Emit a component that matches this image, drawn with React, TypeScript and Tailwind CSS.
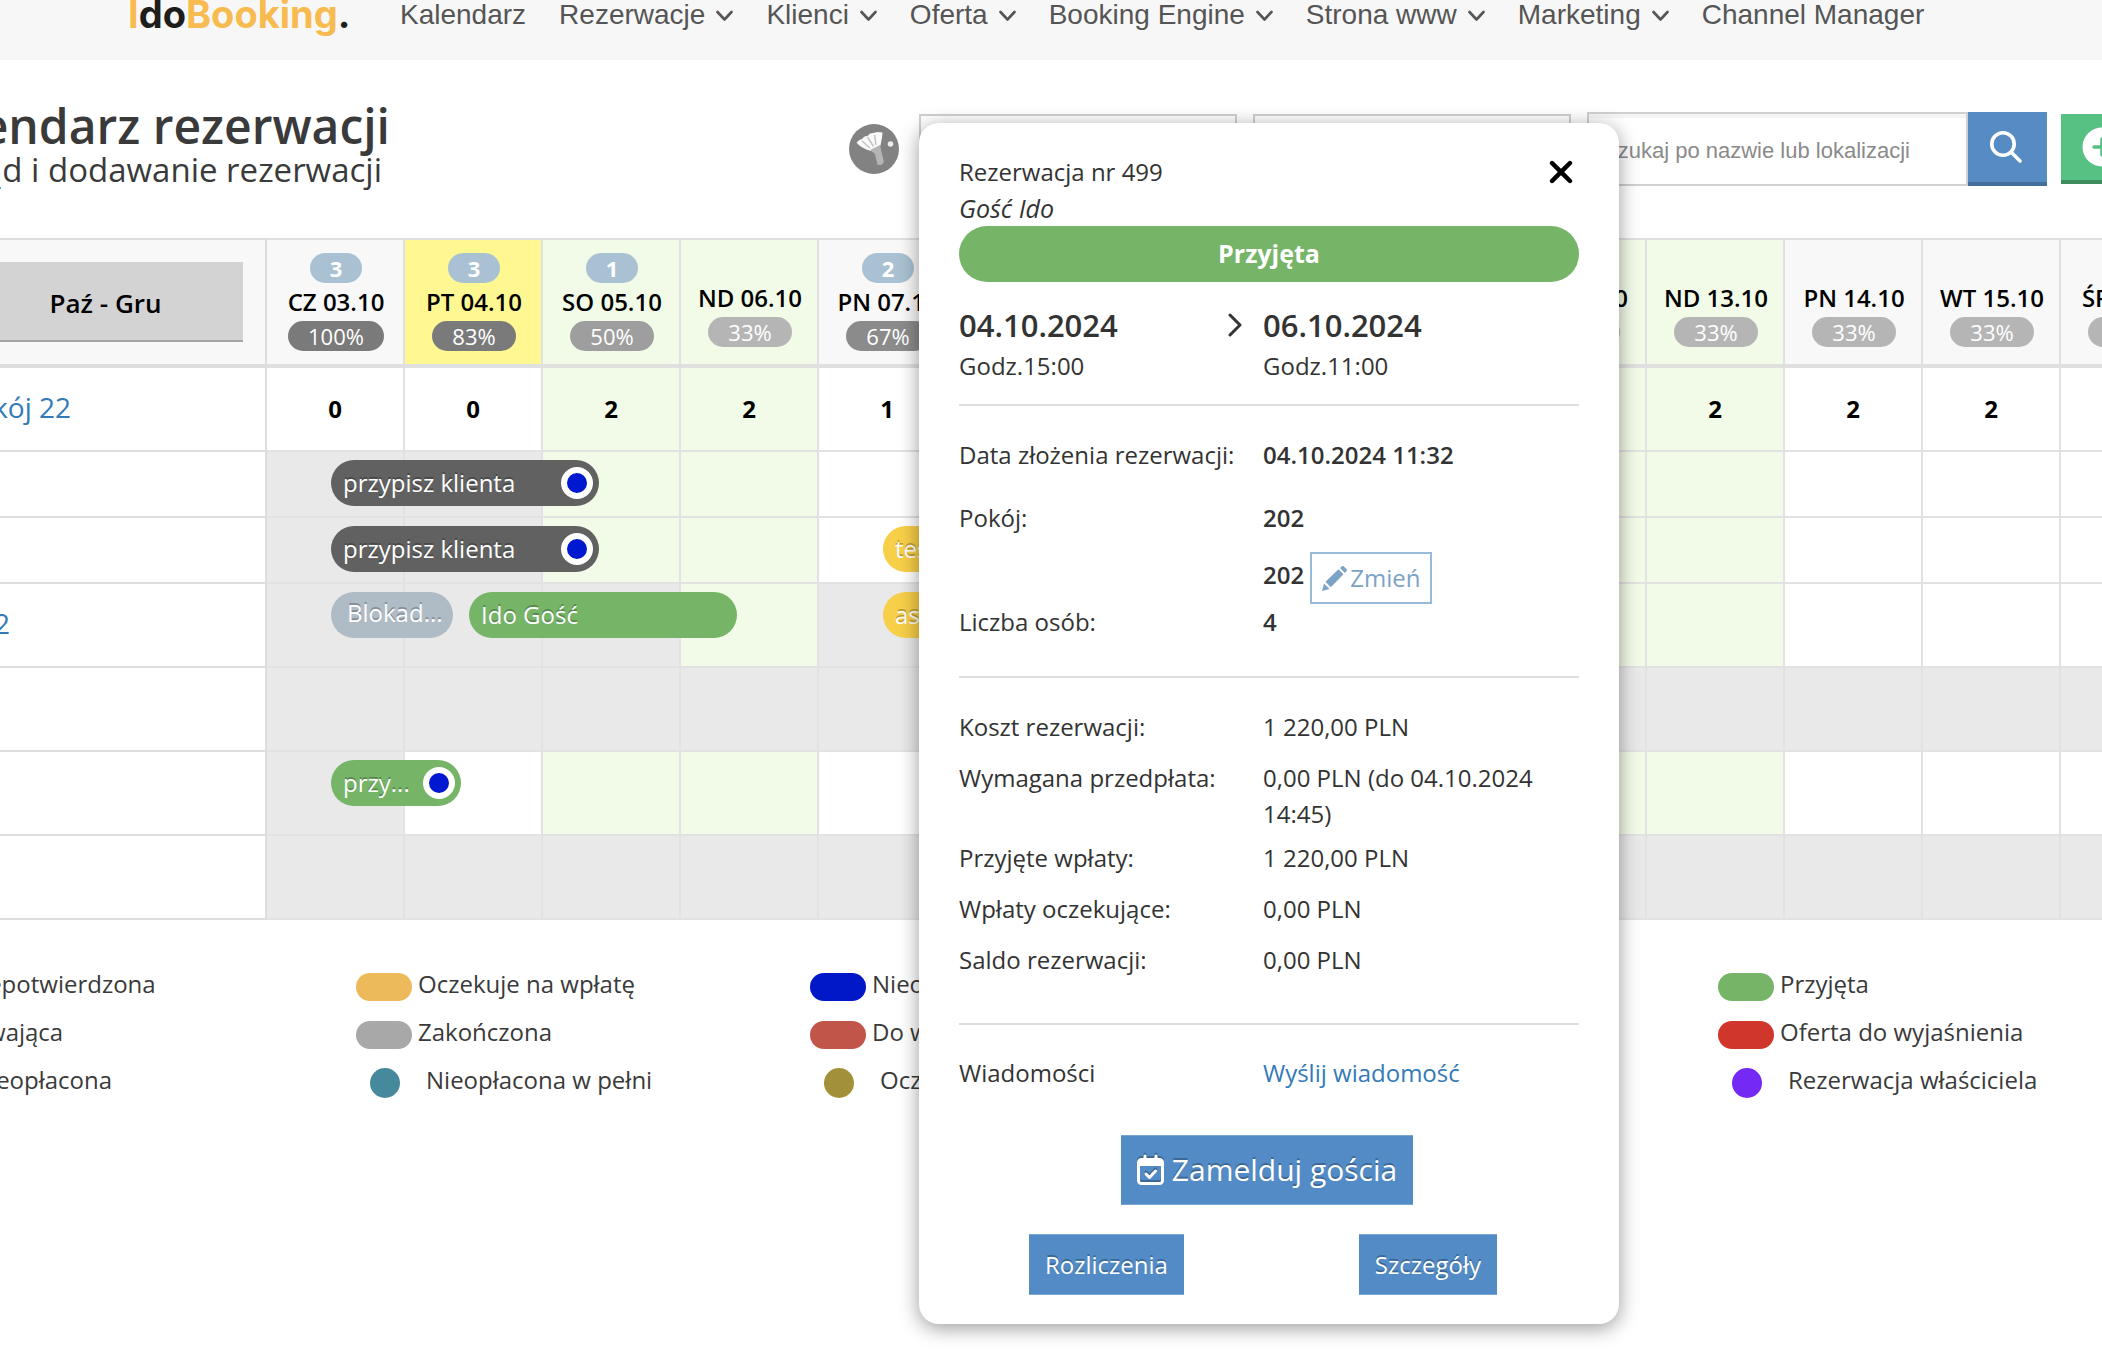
import React from 'react';
import { FaXmark } from 'react-icons/fa6';

type Tone = 'weekend' | 'today' | 'plain';

interface Day {
  label: string;
  count?: number;
  occupancy: number;
  free: number;
  tone: Tone;
}

interface Booking {
  day: number;
  label: string;
  wrapper: string;
  text?: string;
  unpaid?: boolean;
}

interface RoomRow {
  name?: string;
  nameClass?: string;
  height: string;
  showFree?: boolean;
  closed: number[];
  bookings: Booking[];
}

interface LegendItem {
  label: string;
  color: string;
  dot?: boolean;
}

const menu = [
  { label: 'Kalendarz', dropdown: false },
  { label: 'Rezerwacje', dropdown: true },
  { label: 'Klienci', dropdown: true },
  { label: 'Oferta', dropdown: true },
  { label: 'Booking Engine', dropdown: true },
  { label: 'Strona www', dropdown: true },
  { label: 'Marketing', dropdown: true },
  { label: 'Channel Manager', dropdown: false },
];

const days: Day[] = [
  { label: 'CZ 03.10', count: 3, occupancy: 100, free: 0, tone: 'plain' },
  { label: 'PT 04.10', count: 3, occupancy: 83, free: 0, tone: 'today' },
  { label: 'SO 05.10', count: 1, occupancy: 50, free: 2, tone: 'weekend' },
  { label: 'ND 06.10', occupancy: 33, free: 2, tone: 'weekend' },
  { label: 'PN 07.10', count: 2, occupancy: 67, free: 1, tone: 'plain' },
  { label: 'WT 08.10', occupancy: 33, free: 2, tone: 'plain' },
  { label: 'ŚR 09.10', occupancy: 33, free: 2, tone: 'plain' },
  { label: 'CZ 10.10', occupancy: 33, free: 2, tone: 'plain' },
  { label: 'PT 11.10', occupancy: 33, free: 2, tone: 'plain' },
  { label: 'SO 12.10', occupancy: 33, free: 2, tone: 'weekend' },
  { label: 'ND 13.10', occupancy: 33, free: 2, tone: 'weekend' },
  { label: 'PN 14.10', occupancy: 33, free: 2, tone: 'plain' },
  { label: 'WT 15.10', occupancy: 33, free: 2, tone: 'plain' },
  { label: 'ŚR 16.10', occupancy: 33, free: 2, tone: 'plain' },
];

const allDays = days.map((_, i) => i);

const rooms: RoomRow[] = [
  { name: 'Pokój 22', nameClass: 'w-[71px]', height: 'h-[84px]', showFree: true, closed: [], bookings: [] },
  {
    height: 'h-[66px]',
    closed: [0, 1],
    bookings: [{ day: 0, label: 'przypisz klienta', wrapper: 'w-[268px] bg-[#616161]', unpaid: true }],
  },
  {
    height: 'h-[66px]',
    closed: [0, 1],
    bookings: [
      { day: 0, label: 'przypisz klienta', wrapper: 'w-[268px] bg-[#616161]', unpaid: true },
      { day: 4, label: 'test', wrapper: 'w-[268px] bg-[#f8cf49]' },
    ],
  },
  {
    name: 'Pokój 2',
    nameClass: 'w-[10px]',
    height: 'h-[84px]',
    closed: [0, 1, 2, 4],
    bookings: [
      { day: 0, label: 'Blokad...', wrapper: 'w-[122px] bg-[#afbbc5]', text: 'pl-1 pb-1' },
      { day: 1, label: 'Ido Gość', wrapper: 'w-[268px] bg-[#76b468]' },
      { day: 4, label: 'asd', wrapper: 'w-[268px] bg-[#f8cf49]' },
    ],
  },
  { height: 'h-[84px]', closed: allDays, bookings: [] },
  {
    height: 'h-[84px]',
    closed: [0],
    bookings: [{ day: 0, label: 'przy...', wrapper: 'w-[130px] bg-[#76b468]', unpaid: true }],
  },
  { height: 'h-[84px]', closed: allDays, bookings: [] },
];

const legend: LegendItem[][] = [
  [
    { label: 'Niepotwierdzona', color: 'bg-[#616161]' },
    { label: 'Trwająca', color: 'bg-[#4d8ac6]' },
    { label: 'Nieopłacona', color: 'bg-[#0018d0]', dot: true },
  ],
  [
    { label: 'Oczekuje na wpłatę', color: 'bg-[#ecba5b]' },
    { label: 'Zakończona', color: 'bg-[#a8a8a8]' },
    { label: 'Nieopłacona w pełni', color: 'bg-[#47899c]', dot: true },
  ],
  [
    { label: 'Nieobecność', color: 'bg-[#0018c8]' },
    { label: 'Do wyjaśnienia', color: 'bg-[#c25549]' },
    { label: 'Oczekująca', color: 'bg-[#a3903a]', dot: true },
  ],
  [],
  [
    { label: 'Przyjęta', color: 'bg-[#76b468]' },
    { label: 'Oferta do wyjaśnienia', color: 'bg-[#d0362c]' },
    { label: 'Rezerwacja właściciela', color: 'bg-[#7429f5]', dot: true },
  ],
];

const payments = [
  { label: 'Koszt rezerwacji:', value: '1 220,00 PLN' },
  { label: 'Wymagana przedpłata:', value: '0,00 PLN (do 04.10.2024 14:45)' },
  { label: 'Przyjęte wpłaty:', value: '1 220,00 PLN' },
  { label: 'Wpłaty oczekujące:', value: '0,00 PLN' },
  { label: 'Saldo rezerwacji:', value: '0,00 PLN' },
];

const headTone: Record<Tone, string> = {
  plain: 'bg-[#f8f8f8]',
  today: 'bg-[#fff892]',
  weekend: 'bg-[#f2fbe8]',
};

const occupancyColor = (value: number) => {
  if (value > 80) return 'bg-[#7a7a7a]';
  if (value > 60) return 'bg-[#8b8b8b]';
  if (value > 40) return 'bg-[#9e9e9e]';
  return 'bg-[#b5b5b5]';
};

const cellColor = (row: RoomRow, index: number) => {
  if (row.closed.includes(index)) return 'bg-[#e9e9e9]';
  return days[index].tone === 'weekend' ? 'bg-[#f2fbe8]' : 'bg-white';
};

const ChevronDown = () => (
  <svg className="w-[17px] h-3 mt-0.5" viewBox="0 0 17 12" fill="none" stroke="currentColor" strokeWidth="2.6" strokeLinecap="round" strokeLinejoin="round">
    <path d="M1.500 2l7 7.500 7-7.500" />
  </svg>
);

const ShuttlecockIcon = () => (
  <svg className="w-[50px] h-[50px]" viewBox="0 0 50 50">
    <circle cx="25" cy="25" r="25" fill="#828282" />
    <path d="M7.500 18.500l3-2.500 2.500-1 2.500-2.500 3-.5 2.500-2.500 3.500-.5 3.500-1 5.500.5-.5 5-1.500 8-9.500 5.500C15.500 25 10.500 22.500 7.500 18.500z" fill="#fafafa" />
    <path d="M13 17l8 7M18.500 13l6 9.500M25.500 11l1.500 10" stroke="#c4c4c4" strokeWidth="1.600" />
    <path d="M21 26l10-5 1 5 3 12-2.500 3h-4L26 30z" fill="#b4b4b4" />
    <circle cx="41.500" cy="20" r="2.800" fill="#ececec" />
  </svg>
);

const SearchIcon = () => (
  <svg className="w-8 h-8" viewBox="0 0 32 32" fill="none" stroke="currentColor" strokeWidth="3.6" strokeLinecap="round">
    <circle cx="13" cy="13" r="11.200" />
    <path d="M21.500 21.500l8.500 8.500" />
  </svg>
);

const PencilIcon = () => (
  <svg className="w-[25px] h-[25px]" viewBox="0 0 25 25" fill="currentColor">
    <path d="M0 25l2-7.500 5.500 5.500z" />
    <path d="M3.500 15.800L16.500 3.300l5 5L8.800 21.200z" />
    <path d="M18 2l1.600-1.500c.7-.6 1.500-.6 2.200 0l2.600 2.600c.7.7.7 1.500 0 2.200L22.900 7z" />
  </svg>
);

const Navbar = () => (
  <header className="h-[60px] bg-[#f7f7f7] overflow-hidden">
    <nav className="flex items-start gap-[33px] pl-32 font-['Liberation_Sans',Arial,sans-serif] text-[28px] leading-8 text-[#555] whitespace-nowrap -mt-px">
      <a href="#" className="w-[239px] -mt-2 font-['Inter',sans-serif] text-[38px] leading-[46px] font-bold text-[#f7bb4f]">
        I<span className="text-[#1d1d1b]">do</span>Booking<span className="text-[#1d1d1b]">.</span>
      </a>
      {menu.map((item) => (
        <a key={item.label} href="#" className="flex items-center gap-[11px]">
          {item.label}
          {item.dropdown && <ChevronDown />}
        </a>
      ))}
    </nav>
  </header>
);

const Toolbar = () => (
  <div className="flex items-start h-[178px] overflow-hidden">
    <div className="w-[390px] shrink-0 flex flex-col items-end pt-[33px] whitespace-nowrap text-[#3a3a3a]">
      <h1 className="text-[48px] leading-[66px] font-semibold">Kalendarz rezerwacji</h1>
      <p className="pr-2 text-[33px] leading-9 -mt-[7px]">Podgląd i dodawanie rezerwacji</p>
    </div>
    <div className="flex-1 flex justify-end pt-[52px]">
      <button type="button" aria-label="Status sprzątania" className="mt-3 mr-5 h-[50px] shrink-0">
        <ShuttlecockIcon />
      </button>
      <select aria-label="Widok" className="w-[318px] h-[70px] mt-0.5 shrink-0 appearance-none border-2 border-[#d0d0d0] bg-white" />
      <select aria-label="Okres" className="w-[318px] h-[70px] mt-0.5 ml-4 shrink-0 appearance-none border-2 border-[#d0d0d0] bg-white" />
      <div className="flex ml-4 shrink-0">
        <input
          type="search"
          aria-label="Szukaj"
          placeholder="Szukaj po nazwie lub lokalizacji"
          className="w-[381px] h-[74px] border-2 border-[#d0d0d0] pl-3.5 pt-1 shadow-[inset_0_4px_0_#f5f5f5] font-['Liberation_Sans',Arial,sans-serif] text-[22px] placeholder:text-[#8a8a8a]"
        />
        <button type="button" aria-label="Szukaj" className="w-[79px] h-[74px] pr-1 flex items-center justify-center bg-[#568bc4] border-b-4 border-[#446f9d] text-white">
          <SearchIcon />
        </button>
      </div>
      <button type="button" aria-label="Dodaj rezerwację" className="w-[41px] h-[70px] mt-0.5 ml-[14px] pl-[21px] shrink-0 overflow-hidden flex items-center bg-[#57c083] border-b-4 border-[#3d8c5d]">
        <svg className="w-10 h-10 shrink-0" viewBox="0 0 40 40">
          <circle cx="20" cy="20" r="19.500" fill="#fff" />
          <path d="M20 12v16M12 20h16" stroke="#57c083" strokeWidth="3.500" strokeLinecap="round" />
        </svg>
      </button>
    </div>
  </div>
);

const BookingBar: React.FC<{ booking: Booking }> = ({ booking }) => (
  <button
    type="button"
    className={`absolute z-10 top-2 left-16 h-[46px] rounded-full pl-3 pr-1.5 flex items-center justify-between text-2xl font-normal text-white whitespace-nowrap [text-shadow:0_-2px_0_rgba(0,0,0,0.25)] ${booking.wrapper}`}
  >
    <span className={booking.text}>{booking.label}</span>
    {booking.unpaid && <span className="w-8 h-8 rounded-full border-[6px] border-white bg-[#0018d0]" />}
  </button>
);

const Calendar = () => (
  <div className="overflow-hidden">
    <table className="table-fixed w-max border-separate border-spacing-0">
      <thead>
        <tr className="h-[130px]">
          <th className="w-[267px] p-0 bg-[#f8f8f8] border-t-2 border-b-4 border-r-2 border-[#ddd]">
            <button type="button" className="-ml-[54px] w-[274px] h-20 pt-1 bg-[#d3d3d3] border-b-2 border-[#a5a5a5] text-[26px] font-semibold">
              Paź - Gru
            </button>
          </th>
          {days.map((day) => (
            <th key={day.label} className={`w-[138px] p-0 pl-0.5 border-t-2 border-b-4 border-r-2 border-[#e0e0e0] font-normal ${headTone[day.tone]}`}>
              <div className="flex flex-col items-center whitespace-nowrap">
                {day.count ? (
                  <span className="w-[52px] rounded-full bg-[#a9c1d2] text-[22px] leading-[30px] font-bold text-white">{day.count}</span>
                ) : (
                  <span className="h-[22px]" />
                )}
                <span className="text-2xl leading-[38px] font-semibold">{day.label}</span>
                <span className={`px-5 rounded-full text-[22px] leading-[30px] text-white ${occupancyColor(day.occupancy)}`}>{day.occupancy}%</span>
              </div>
            </th>
          ))}
        </tr>
      </thead>
      <tbody>
        {rooms.map((row, rowIndex) => (
          <tr key={rowIndex} className={row.height}>
            <th className="p-0 pb-1 border-b-2 border-r-2 border-[#ddd] font-normal text-[28px] text-[#337ab7]">
              {row.name && (
                <a href="#" className={`flex justify-end overflow-hidden whitespace-nowrap ${row.nameClass}`}>
                  {row.name}
                </a>
              )}
            </th>
            {days.map((day, i) => (
              <td key={day.label} className={`relative p-0 border-b-2 border-r-2 border-[#e2e2e2] text-center text-2xl font-bold ${cellColor(row, i)}`}>
                {row.showFree && day.free}
                {row.bookings
                  .filter((booking) => booking.day === i)
                  .map((booking) => (
                    <BookingBar key={booking.label} booking={booking} />
                  ))}
              </td>
            ))}
          </tr>
        ))}
      </tbody>
    </table>
  </div>
);

const Legend = () => (
  <div className="-ml-[98px] mt-10 pb-10 grid grid-cols-[repeat(5,454px)] text-2xl text-[#3a3a3a]">
    {legend.map((column, i) => (
      <ul key={i}>
        {column.map((item) => (
          <li key={item.label} className="h-12 flex items-center">
            {item.dot ? (
              <span className={`w-[30px] h-[30px] mt-1.5 ml-[14px] mr-[26px] rounded-full ${item.color}`} />
            ) : (
              <span className={`w-14 h-7 mt-1.5 mr-1.5 rounded-full ${item.color}`} />
            )}
            {item.label}
          </li>
        ))}
      </ul>
    ))}
  </div>
);

const buttonClass = 'bg-[#528bc5] border-y border-[#78a5d2] text-white [text-shadow:0_-2px_0_rgba(0,0,0,0.25)]';

const ReservationPopup = () => (
  <div role="dialog" aria-label="Rezerwacja nr 499" className="absolute z-20 top-[123px] left-[919px] w-[700px] px-10 pt-[31px] pb-[29px] rounded-[20px] bg-white shadow-[0_4px_20px_rgba(0,0,0,0.4)] text-2xl leading-9 text-[#333]">
    <div className="flex justify-between">
      <div>
        <p>Rezerwacja nr 499</p>
        <p className="text-[25px] leading-9 italic">Gość Ido</p>
      </div>
      <button type="button" aria-label="Zamknij" className="h-9 text-black">
        <FaXmark className="w-9 h-9" />
      </button>
    </div>
    <p className="h-14 rounded-full bg-[#76b468] text-center text-[25px] leading-[54px] font-bold text-white">Przyjęta</p>

    <div className="grid grid-cols-[304px_1fr] mt-5 pb-5 border-b-2 border-[#ddd]">
      <div>
        <p className="flex items-center justify-between pr-5 text-[31px] leading-[46px] font-semibold">
          04.10.2024
          <svg className="w-[15px] h-6" viewBox="0 0 15 24" fill="none" stroke="currentColor" strokeWidth="3" strokeLinecap="round" strokeLinejoin="round">
            <path d="M2 2l10 10L2 22" />
          </svg>
        </p>
        <p>Godz.15:00</p>
      </div>
      <div>
        <p className="text-[31px] leading-[46px] font-semibold">06.10.2024</p>
        <p>Godz.11:00</p>
      </div>
    </div>

    <dl className="grid grid-cols-[304px_1fr] pt-[31px] pb-9 border-b-2 border-[#ddd]">
      <dt>Data złożenia rezerwacji:</dt>
      <dd className="pb-[27px] font-semibold">04.10.2024 11:32</dd>
      <dt>Pokój:</dt>
      <dd className="font-semibold">
        <p>202</p>
        <p className="flex items-center gap-1.5 mt-4">
          <span className="pb-1.5">202</span>
          <button type="button" className="flex items-center gap-[3px] h-[52px] px-2.5 border-2 border-[#97bad8] font-normal text-[#7ba3c6]">
            <PencilIcon />
            Zmień
          </button>
        </p>
      </dd>
      <dt>Liczba osób:</dt>
      <dd className="font-semibold">4</dd>
    </dl>

    <dl className="pt-[31px] pb-[30px] border-b-2 border-[#ddd]">
      {payments.map((payment) => (
        <div key={payment.label} className="grid grid-cols-[304px_1fr] min-h-[51px] pb-2">
          <dt>{payment.label}</dt>
          <dd>{payment.value}</dd>
        </div>
      ))}
    </dl>

    <div className="grid grid-cols-[304px_1fr] pt-[30px]">
      <span>Wiadomości</span>
      <a href="#" className="text-[#337ab7]">Wyślij wiadomość</a>
    </div>

    <div className="flex justify-center mt-11 pr-1">
      <button type="button" className={`flex items-center gap-2 h-[70px] px-4 text-[30px] ${buttonClass}`}>
        <svg className="w-[27px] h-8 drop-shadow-[0_-2px_0_rgba(0,0,0,0.25)]" viewBox="0 0 27 32" fill="none" stroke="#fff" strokeWidth="3" strokeLinecap="round" strokeLinejoin="round">
          <rect x="1.5" y="5.5" width="24" height="24" rx="3" />
          <path d="M2 7h23v5H2z" fill="#fff" stroke="none" />
          <path d="M8 2v4M19 2v4M9 20l3.500 3.500L18.500 17" />
        </svg>
        Zamelduj gościa
      </button>
    </div>
    <div className="flex justify-between mt-[29px] pl-[70px] pr-[82px]">
      <button type="button" className={`h-[61px] px-4 ${buttonClass}`}>Rozliczenia</button>
      <button type="button" className={`h-[61px] px-4 ${buttonClass}`}>Szczegóły</button>
    </div>
  </div>
);

const App: React.FC = () => (
  <div className="relative min-h-screen overflow-hidden bg-white font-['Open_Sans','Noto_Sans',sans-serif] text-black">
    <Navbar />
    <main>
      <Toolbar />
      <Calendar />
      <Legend />
    </main>
    <ReservationPopup />
  </div>
);

export default App;
